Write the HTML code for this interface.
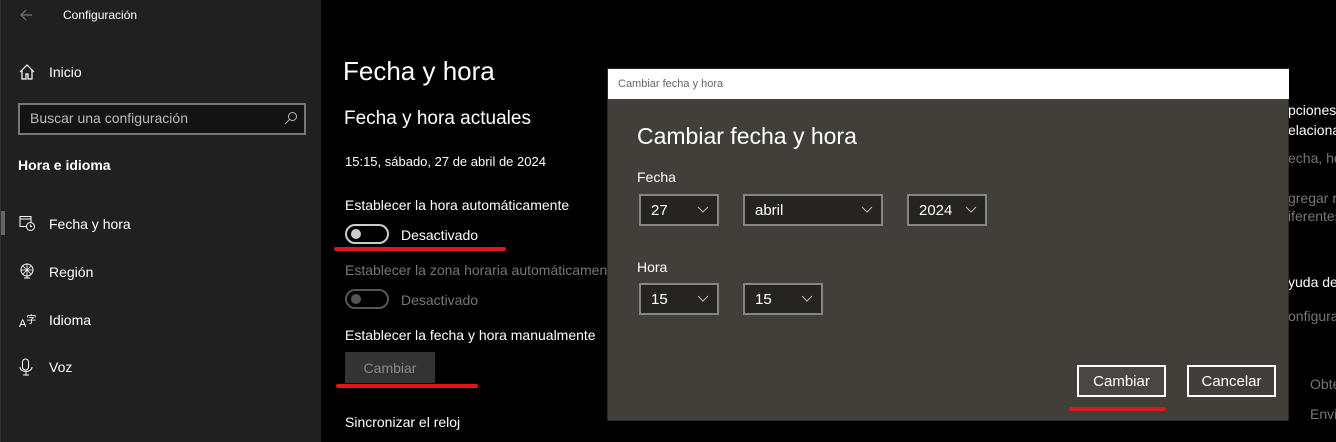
<!DOCTYPE html>
<html><head><meta charset="utf-8"><style>
*{margin:0;padding:0;box-sizing:border-box}
body{width:1336px;height:442px;overflow:hidden;background:#000;font-family:"Liberation Sans",sans-serif;color:#fff;position:relative}
.a{position:absolute;white-space:nowrap}
.side{position:absolute;left:0;top:0;width:321px;height:442px;background:#202020;border-left:1px solid #333}
.t{font-size:14px}
.gray{color:#777}
.sel{position:absolute;border:2px solid #858585;background:#252422;height:32px;font-size:15px;padding:6px 0 0 10px}
.sel svg{position:absolute;right:8px;top:10px}
.btn{position:absolute;border:2px solid #fff;background:#4a4643;font-size:15px;text-align:center;padding-top:6px;height:32px}
.red{position:absolute;height:4px;background:#e0161b;border-radius:2px}
.tog{position:absolute;width:44px;height:20px;border:2px solid #ccc;border-radius:10px}
.tog:after{content:"";position:absolute;left:4px;top:3px;width:10px;height:10px;border-radius:50%;background:#ccc}
.tog.g{border-color:#555}
.tog.g:after{background:#555}
</style></head><body>
<div class="side">
<svg class="a" style="left:18px;top:8px" width="14" height="14" viewBox="0 0 14 14"><path d="M13 7H2M7 2L2 7l5 5" stroke="#777" fill="none" stroke-width="1.2"/></svg>
<div class="a" style="left:62px;top:8px;font-size:12px">Configuración</div>
<svg class="a" style="left:18px;top:64px" width="16" height="16" viewBox="0 0 16 16"><path d="M1 8L8 1l7 7M3 6v9h4v-5h2v5h4V6" stroke="#fff" fill="none" stroke-width="1.2"/></svg>
<div class="a t" style="left:48px;top:64px">Inicio</div>
<div class="a" style="left:17px;top:103px;width:288px;height:32px;border:2px solid #777;background:#141414"></div>
<div class="a t" style="left:29px;top:110px;color:#bbb">Buscar una configuración</div>
<svg class="a" style="left:283px;top:111px" width="14" height="14" viewBox="0 0 14 14"><circle cx="8.5" cy="5.5" r="4" stroke="#bbb" fill="none"/><path d="M5.5 8.5L1 13" stroke="#bbb"/></svg>
<div class="a t" style="left:17px;top:157px;font-weight:bold">Hora e idioma</div>
<div class="a" style="left:0;top:211px;width:4px;height:24px;background:#666"></div>
<svg class="a" style="left:18px;top:215px" width="16" height="16" viewBox="0 0 16 16"><rect x="1" y="1.5" width="11" height="10" stroke="#fff" fill="none"/><path d="M1 4h11" stroke="#fff"/><circle cx="11.5" cy="11.5" r="4" fill="#202020" stroke="#fff"/><path d="M11.5 9.5v2h1.5" stroke="#fff" fill="none"/></svg>
<div class="a t" style="left:48px;top:216px">Fecha y hora</div>
<svg class="a" style="left:18px;top:263px" width="16" height="16" viewBox="0 0 16 16"><circle cx="8" cy="7" r="6" stroke="#fff" fill="none"/><path d="M2 7h12M8 1v12M4 3l8 8M12 3l-8 8" stroke="#fff" stroke-width=".8"/><path d="M8 13v2M5 15h6" stroke="#fff"/></svg>
<div class="a t" style="left:48px;top:264px">Región</div>
<div class="a" style="left:18px;top:311px;font-size:11px">A<span style="font-size:10px;font-family:'Noto Sans CJK SC',sans-serif;vertical-align:4px">字</span></div>
<div class="a t" style="left:48px;top:312px">Idioma</div>
<svg class="a" style="left:18px;top:358px" width="14" height="18" viewBox="0 0 14 18"><rect x="3.5" y="1" width="6" height="11" rx="3" stroke="#fff" fill="none"/><path d="M1 9c0 6 12 6 12 0M7 14v3M4 17h6" stroke="#fff" fill="none"/></svg>
<div class="a t" style="left:48px;top:359px">Voz</div>
</div>

<div class="a" style="left:343px;top:56px;font-size:26px">Fecha y hora</div>
<div class="a" style="left:344px;top:108px;font-size:19px">Fecha y hora actuales</div>
<div class="a" style="left:345px;top:154px;font-size:13px">15:15, sábado, 27 de abril de 2024</div>
<div class="a t" style="left:345px;top:197px">Establecer la hora automáticamente</div>
<div class="tog" style="left:345px;top:224px"></div>
<div class="a t" style="left:401px;top:227px">Desactivado</div>
<div class="red" style="left:334px;top:247px;width:172px"></div>
<div class="a t gray" style="left:345px;top:262px">Establecer la zona horaria automáticamente</div>
<div class="tog g" style="left:345px;top:289px"></div>
<div class="a t gray" style="left:401px;top:292px">Desactivado</div>
<div class="a t" style="left:345px;top:327px">Establecer la fecha y hora manualmente</div>
<div class="a t" style="left:345px;top:352px;width:90px;height:31px;background:#333;color:#888;text-align:center;padding-top:8px">Cambiar</div>
<div class="red" style="left:336px;top:384px;width:142px"></div>
<div class="a t" style="left:345px;top:414px">Sincronizar el reloj</div>

<div class="a t" style="left:1288px;top:102px">pciones</div>
<div class="a t" style="left:1288px;top:122px">elaciona</div>
<div class="a t gray" style="left:1288px;top:150px">echa, ho</div>
<div class="a t gray" style="left:1288px;top:190px">gregar r</div>
<div class="a t gray" style="left:1288px;top:208px">iferentes</div>
<div class="a t" style="left:1288px;top:274px">yuda de</div>
<div class="a t gray" style="left:1288px;top:308px">onfigura</div>
<div class="a t gray" style="left:1310px;top:376px">Obte</div>
<div class="a t gray" style="left:1310px;top:406px">Envi</div>

<div class="a" style="left:607px;top:68px;width:682px;height:353px;background:#423f3b;border:1px solid #2a2a2a">
<div class="a" style="left:0;top:0;width:681px;height:30px;background:#fff;color:#666;font-size:11px;padding:9px 0 0 10px">Cambiar fecha y hora</div>
<div class="a" style="left:29px;top:54px;font-size:23px">Cambiar fecha y hora</div>
<div class="a t" style="left:29px;top:100px">Fecha</div>
<div class="sel" style="left:31px;top:125px;width:80px">27<svg width="12" height="8"><path d="M1 1l5 5 5-5" stroke="#bbb" fill="none"/></svg></div>
<div class="sel" style="left:135px;top:125px;width:140px">abril<svg width="12" height="8"><path d="M1 1l5 5 5-5" stroke="#bbb" fill="none"/></svg></div>
<div class="sel" style="left:299px;top:125px;width:80px">2024<svg width="12" height="8"><path d="M1 1l5 5 5-5" stroke="#bbb" fill="none"/></svg></div>
<div class="a t" style="left:29px;top:190px">Hora</div>
<div class="sel" style="left:31px;top:214px;width:80px">15<svg width="12" height="8"><path d="M1 1l5 5 5-5" stroke="#bbb" fill="none"/></svg></div>
<div class="sel" style="left:135px;top:214px;width:80px">15<svg width="12" height="8"><path d="M1 1l5 5 5-5" stroke="#bbb" fill="none"/></svg></div>
<div class="btn" style="left:469px;top:296px;width:89px">Cambiar</div>
<div class="btn" style="left:579px;top:296px;width:89px;background:#423f3b">Cancelar</div>
<div class="red" style="left:461px;top:338px;width:97px"></div>
</div>
</body></html>
